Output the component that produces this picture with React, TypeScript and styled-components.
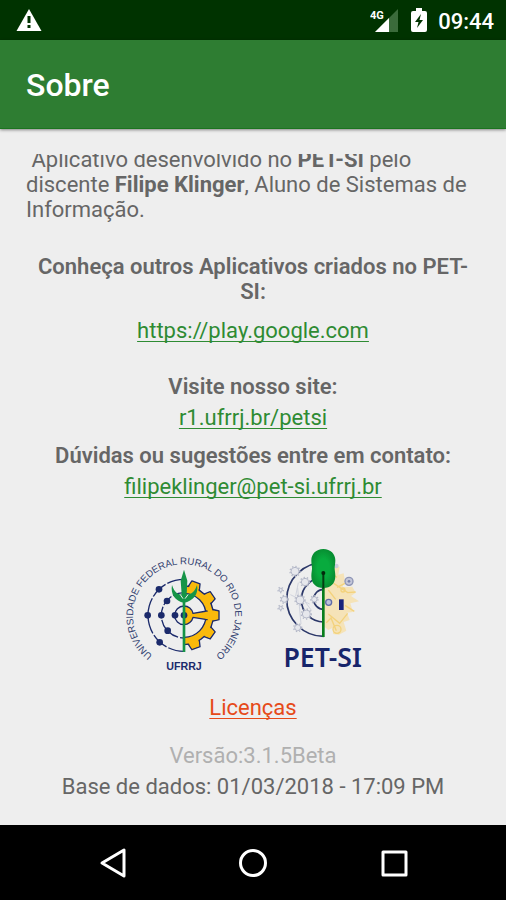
import React from "react";
import styled, { createGlobalStyle } from "styled-components";

const GlobalStyle = createGlobalStyle`
  html, body, #root { height: 100%; }
  body { margin: 0; background: #eee; font-family: Roboto, sans-serif; }
  *, *::before, *::after { box-sizing: border-box; }
`;

const Screen = styled.div`
  display: flex;
  flex-direction: column;
  height: 100%;
  background: #eeeeee;
  color: #666666;
`;

const StatusBar = styled.div`
  display: flex;
  align-items: center;
  flex: none;
  height: 40px;
  padding: 0 12px 0 16px;
  background: #003300;
  color: #fff;
`;

const StatusIcons = styled.div`
  display: flex;
  align-items: center;
  gap: 11px;
  margin-left: auto;
`;

const Clock = styled.time`
  padding-top: 3px;
  font-size: 22px;
  font-weight: 500;
  line-height: 26px;
`;

const AppBar = styled.header`
  display: flex;
  align-items: center;
  flex: none;
  height: 89px;
  padding: 2px 26px 0;
  background: #2e7d32;
  border-bottom: 1px solid #1b741f;
  box-shadow: 0 1px 3px rgba(0, 0, 0, 0.45);
`;

const Title = styled.h1`
  margin: 0;
  color: #fff;
  font-size: 32px;
  font-weight: 500;
  line-height: 40px;
`;

/* The reversed column keeps the view scrolled to its end. */
const ScrollView = styled.main`
  display: flex;
  flex-direction: column-reverse;
  flex: 1;
  min-height: 0;
  margin: 25px 26px 0;
  overflow-y: auto;
  scrollbar-width: none;
`;

const Content = styled.div`
  flex: none;
  padding-bottom: 26px;
  font-size: 22px;
  line-height: 25px;
  text-align: center;
`;

const Intro = styled.p`
  margin: 0 0 32px;
  text-align: left;
  white-space: pre-wrap;
  & b { font-weight: 700; }
`;

const Section = styled.section<{ $gap: number; $after: number }>`
  display: flex;
  flex-direction: column;
  align-items: center;
  gap: ${(p) => p.$gap}px;
  margin-bottom: ${(p) => p.$after}px;
`;

const Heading = styled.h2`
  margin: 0;
  font-size: 22px;
  font-weight: 600;
  line-height: 25px;
`;

const Link = styled.a<{ $tone?: "accent" }>`
  color: ${(p) => (p.$tone === "accent" ? "#e64a19" : "#2e8b33")};
  text-decoration: underline;
  text-decoration-thickness: 1px;
  text-underline-offset: 3px;
  text-decoration-skip-ink: none;
`;

const Logos = styled.div`
  display: flex;
  justify-content: center;
  gap: 10px;
  margin: 41px 0 15px;
`;

const Line = styled.p<{ $muted?: boolean }>`
  margin: 0;
  color: ${(p) => (p.$muted ? "#b0b0b0" : "inherit")};
`;

const NavBar = styled.nav`
  display: flex;
  justify-content: center;
  align-items: center;
  gap: 92px;
  flex: none;
  height: 75px;
  background: #000;
`;

const NavButton = styled.button`
  display: grid;
  place-items: center;
  width: 49px;
  height: 48px;
  padding: 0;
  border: 0;
  background: none;
`;

const NAVY = "#1b2a6b";
const GOLD = "#f9b90c";

const WarningIcon = () => (
  <svg width="26" height="24" viewBox="0 0 26 24" aria-label="Aviso">
    <path d="M13 1 25.500 23H.5Z" fill="#fff" />
    <path d="M11.500 8h3v7h-3zM11.500 17h3v3h-3z" fill="#003300" />
  </svg>
);

const SignalIcon = () => (
  <svg width="30" height="26" viewBox="0 0 30 26" aria-label="Sinal 4G">
    <path d="M28 2v23H5Z" fill="#3b6b3b" />
    <path d="M19 11v14H5Z" fill="#fff" />
    <text x="0" y="12" fontSize="11" fontWeight="700" fill="#fff" fontFamily="Roboto, sans-serif">4G</text>
  </svg>
);

const BatteryIcon = () => (
  <svg width="16" height="26" viewBox="0 0 16 26" aria-label="Bateria carregando">
    <path d="M5 1h6v3h3q2 0 2 2v17q0 2-2 2H2q-2 0-2-2V6q0-2 2-2h3Z" fill="#fff" />
    <path d="M10 7 4 15h3.500L6 21l6-8H8.500Z" fill="#003300" />
  </svg>
);

const ORBIT_NODES = [
  [132, 148], [98, 226], [134, 307], [156, 183], [139, 226], [158, 272], [180, 226], [207, 226],
];

const GEAR_TEETH = [20, 55, 90, 125, 160];

const UfrrjLogo = () => (
  <svg width="140" height="140" viewBox="0 0 420 420" role="img" aria-label="UFRRJ">
    <defs>
      <path id="seal-ring" d="M137 362A153 153 0 1 1 277 362" />
      <clipPath id="gear-half"><path d="M207 110h120v232H207z" /></clipPath>
    </defs>
    <text fontFamily="'Liberation Sans', sans-serif" fontSize="29" fill="#31406f">
      <textPath href="#seal-ring" startOffset="50%" textAnchor="middle">
        UNIVERSIDADE FEDERAL RURAL DO RIO DE JANEIRO
      </textPath>
    </text>
    <g clipPath="url(#gear-half)" stroke={NAVY} strokeWidth="4" strokeLinejoin="round">
      {GEAR_TEETH.map((a) => (
        <path key={a} d="M188 146 194 121H220L226 146Z" fill={GOLD} transform={`rotate(${a} 207 226)`} />
      ))}
      <path d="M207 138a88 88 0 0 1 0 176v-22a66 66 0 0 0 0-132Z" fill={GOLD} />
      <g fill={GOLD} stroke="none">
        {GEAR_TEETH.map((a) => (
          <path key={a} d="M190 149 196 124H218L224 149Z" transform={`rotate(${a} 207 226)`} />
        ))}
      </g>
      <path d="M207 198a28 28 0 0 1 27 22l42-7v26l-42-7a28 28 0 0 1-27 22Z" fill={GOLD} />
      <path d="M272 215h10v22h-10z" fill={GOLD} stroke="none" />
    </g>
    <g fill="none" stroke={NAVY} strokeWidth="4">
      <path d="M207 118a108 108 0 0 0 0 216" strokeDasharray="52 6" />
      <path d="M207 158a68 68 0 0 0 0 136" strokeDasharray="34 6" />
      <path d="M207 198a28 28 0 0 0 0 56" />
    </g>
    {ORBIT_NODES.map(([x, y]) => (
      <circle key={`${x}-${y}`} cx={x} cy={y} r="10" fill={NAVY} />
    ))}
    <path d="M203 170h8v166h-8z" fill="#159447" />
    <path
      d="M171 135C166 162 180 184 207 188C234 184 252 162 246 135C239 156 228 165 215 163L217 122L207 89L197 122L200 163C188 165 178 156 171 135Z"
      fill="#159447"
    />
    <path d="M196 164 204 176M219 164 210 176" stroke="#eeeeee" strokeWidth="3" />
    <text x="207" y="390" textAnchor="middle" fontFamily="'Liberation Sans', sans-serif" fontSize="32" fontWeight="700" fill={NAVY}>
      UFRRJ
    </text>
  </svg>
);

const PET_NODES = [
  [90, 94, 12], [58, 178, 9], [98, 263, 9], [120, 126, 11], [105, 180, 12], [124, 222, 12], [148, 178, 8], [47, 150, 5], [47, 204, 5],
];

const PetSiLogo = () => (
  <svg width="126" height="140" viewBox="0 0 378 420" role="img" aria-label="PET-SI">
    <defs>
      <radialGradient id="leaf">
        <stop offset="0.5" stopColor="#08ab3e" />
        <stop offset="1" stopColor="#078f32" />
      </radialGradient>
    </defs>
    <path
      d="M176 78 224 80 220 104 236 100 240 124 232 142 262 140 272 158 258 168 282 184 256 190 264 216 246 218 254 240 236 246 244 272 222 284 204 282 206 262 190 270 178 260Z"
      fill="#f5e3b8"
    />
    <g fill="none" stroke="#f3d27c" strokeWidth="4">
      <path d="M184 92 216 112M206 130 248 158 272 156M190 150 212 178M190 222 224 250 248 220M240 196 268 214M184 248 198 234 214 272M216 142 240 130" />
      <circle cx="216" cy="268" r="12" />
      <circle cx="234" cy="150" r="6" />
    </g>
    <circle cx="252" cy="124" r="12" fill="#c3c6d8" stroke="#8d94b5" strokeWidth="4" />
    <circle cx="252" cy="124" r="4" fill="#7780ac" />
    <circle cx="214" cy="78" r="7" fill="#c9ccdb" />
    <circle cx="191" cy="187" r="9" fill="#bcc2da" stroke="#606ca8" strokeWidth="4" />
    <path d="M222 178h14v32h-14z" fill="#17227c" />
    <g fill="none" stroke="#2b3768" strokeWidth="5">
      <path d="M176 68A111 111 0 0 0 65 178A111 111 0 0 0 176 289" />
      <path d="M176 112a67 67 0 0 0 0 134" />
      <path d="M176 148a30 30 0 0 0 0 60" />
    </g>
    <path d="M100 128 92 168M98 144 108 252M76 164 134 192M106 166 140 212" stroke="#d0d3dd" strokeWidth="3" fill="none" />
    {PET_NODES.map(([x, y, r]) => (
      <g key={`${x}-${y}`}>
        <circle cx={x} cy={y} r={r} fill="#e6e7ec" stroke="#b4b8c8" strokeWidth="3" />
        <circle cx={x} cy={y} r={r + 3} fill="none" stroke="#b4b8c8" strokeWidth="4" strokeDasharray="4 6" />
      </g>
    ))}
    <path d="M171 95h8v196h-8z" fill="#087d1c" />
    <path d="M175 27c22 0 36 15 36 34 0 10-2 17-2 24s2 14 2 23c0 23-14 36-36 36s-36-13-36-36c0-9 2-16 2-23s-2-14-2-24c0-19 14-34 36-34Z" fill="url(#leaf)" />
    <path d="M172 102h6v44h-6z" fill="#043c12" />
    <circle cx="175" cy="99" r="6" fill="#032a0b" />
    <text x="173" y="380" textAnchor="middle" fontFamily="'Noto Sans', sans-serif" fontSize="80" fontWeight="600" fill="#17256b">
      PET-SI
    </text>
  </svg>
);

export default function App() {
  return (
    <Screen>
      <GlobalStyle />
      <StatusBar>
        <WarningIcon />
        <StatusIcons>
          <SignalIcon />
          <BatteryIcon />
          <Clock>09:44</Clock>
        </StatusIcons>
      </StatusBar>
      <AppBar>
        <Title>Sobre</Title>
      </AppBar>
      <ScrollView>
        <Content>
          <Intro>
            {" "}Aplicativo desenvolvido no <b>PET-SI</b> pelo discente <b>Filipe Klinger</b>, Aluno de Sistemas de Informação.
          </Intro>
          <Section $gap={14} $after={31}>
            <Heading>Conheça outros Aplicativos criados no PET-SI:</Heading>
            <Link href="https://play.google.com">https://play.google.com</Link>
          </Section>
          <Section $gap={6} $after={13}>
            <Heading>Visite nosso site:</Heading>
            <Link href="http://r1.ufrrj.br/petsi">r1.ufrrj.br/petsi</Link>
          </Section>
          <Section $gap={6} $after={0}>
            <Heading>Dúvidas ou sugestões entre em contato:</Heading>
            <Link href="mailto:filipeklinger@pet-si.ufrrj.br">filipeklinger@pet-si.ufrrj.br</Link>
          </Section>
          <Logos>
            <UfrrjLogo />
            <PetSiLogo />
          </Logos>
          <Section $gap={6} $after={23}>
            <Link $tone="accent" href="#licencas">Licenças</Link>
          </Section>
          <Section $gap={6} $after={0}>
            <Line $muted>Versão:3.1.5Beta</Line>
            <Line>Base de dados: 01/03/2018 - 17:09 PM</Line>
          </Section>
        </Content>
      </ScrollView>
      <NavBar>
        <NavButton aria-label="Voltar">
          <svg width="30" height="32" viewBox="0 0 30 32" fill="none" stroke="#fff" strokeWidth="3" strokeLinejoin="round">
            <path d="M27 3v26L5 16Z" />
          </svg>
        </NavButton>
        <NavButton aria-label="Início">
          <svg width="30" height="30" viewBox="0 0 30 30" fill="none" stroke="#fff" strokeWidth="3">
            <circle cx="15" cy="15" r="12.500" />
          </svg>
        </NavButton>
        <NavButton aria-label="Recentes">
          <svg width="30" height="30" viewBox="0 0 30 30" fill="none" stroke="#fff" strokeWidth="3" strokeLinejoin="round">
            <path d="M4 4h23v23H4z" />
          </svg>
        </NavButton>
      </NavBar>
    </Screen>
  );
}
